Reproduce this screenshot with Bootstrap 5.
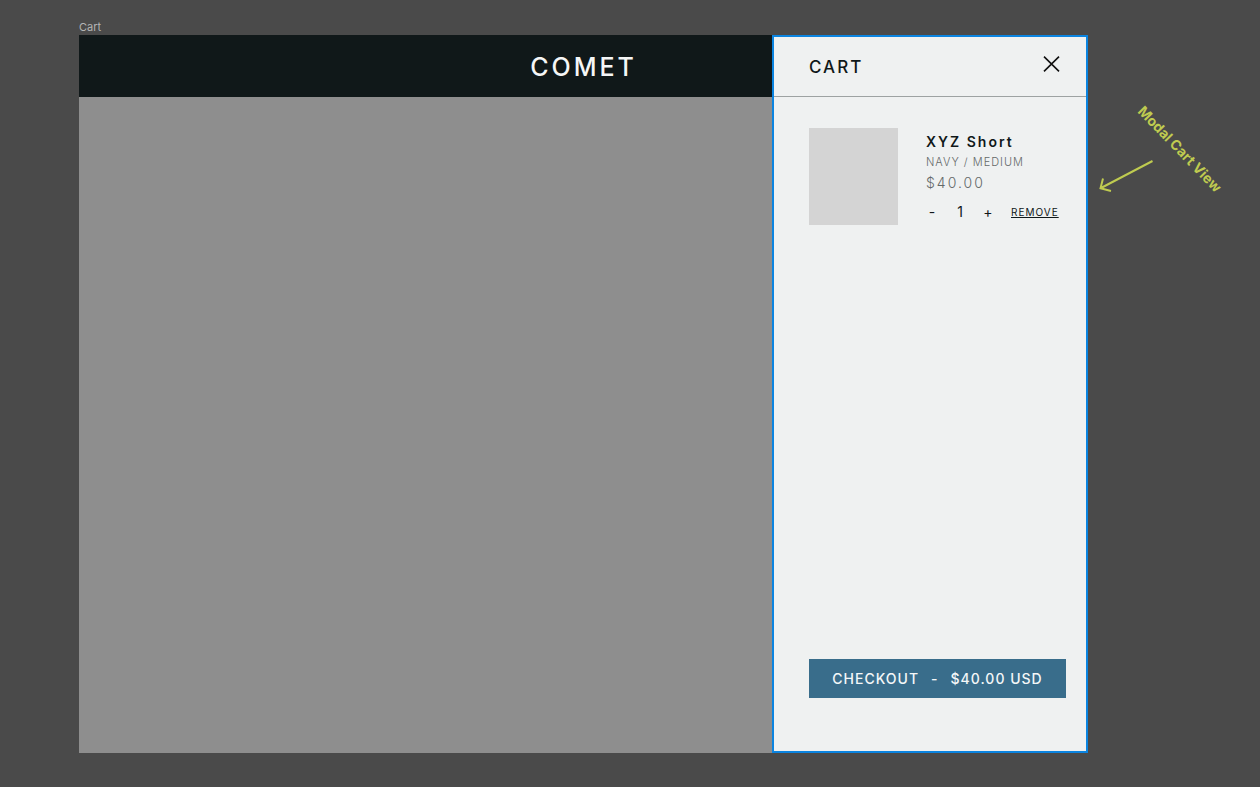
<!DOCTYPE html>
<html lang="en">
<head>
<meta charset="utf-8">
<meta name="viewport" content="width=device-width, initial-scale=1">
<title>Cart</title>
<link href="https://cdn.jsdelivr.net/npm/bootstrap@5.3.0/dist/css/bootstrap.min.css" rel="stylesheet">
<style>
  body { background: #4a4a4a; font-family: Inter, "Liberation Sans", sans-serif; color: #101819; }
  .board { padding: 19px 0 34px 79px; }
  .frame-label { font-size: 11px; line-height: 16px; color: #b4b4b4; }
  .frame { background: #8e8e8e; }
  .site-bar { background: #101819; height: 62px; padding-top: 2px; }
  .brand { color: #f5f6f6; font-size: 25px; line-height: 32px; font-weight: 500; letter-spacing: 3px; text-decoration: none; }
  .drawer { width: 316px; background: #eff1f1; border: 2px solid #0b84e0; }
  .drawer-head { height: 60px; padding: 0 26px 0 35px; border-bottom: 1px solid #9da2a2; }
  .drawer-title { font-size: 17px; line-height: 24px; font-weight: 500; letter-spacing: 2px; }
  .plain { background: none; border: 0; padding: 0; color: inherit; }
  .close-cart { padding-bottom: 6px; }
  .cart-item { padding: 31px 20px 0 35px; gap: 28px; }
  .thumb { width: 89px; height: 97px; background: #d4d4d4; }
  .item-name { font-size: 14px; line-height: 20px; font-weight: 600; letter-spacing: 2px; margin-top: 4px; }
  .item-variant { font-size: 11px; line-height: 20px; font-weight: 300; letter-spacing: 1px; color: #646969; }
  .item-price { font-size: 14px; line-height: 22px; font-weight: 300; letter-spacing: 2px; color: #646969; }
  .qty { font-size: 14px; line-height: 20px; margin-top: 8px; }
  .qty .plain { width: 12px; }
  .qty input { width: 44px; background: none; border: 0; padding: 0; color: inherit; text-align: center; }
  .remove { font-size: 10px; letter-spacing: 1px; color: inherit; margin-left: 17px; text-underline-offset: 1px; }
  .drawer-foot { padding: 0 20px 53px 35px; }
  .checkout { background: #396d8b; color: #f4f7f8; border-radius: 0; height: 39px; padding: 0; font-size: 14px; line-height: 20px; font-weight: 500; letter-spacing: 1px; gap: 12px; }
  .checkout:hover { background: #2f5d78; color: #fff; }
  .notes { width: 172px; padding-top: 62px; }
  .notes text { font: 700 14px Inter, "Liberation Sans", sans-serif; fill: #bfcb50; }
</style>
</head>
<body>
<div class="board min-vh-100 d-flex flex-column">
  <div class="frame-label">Cart</div>
  <div class="d-flex flex-grow-1">
    <main class="frame flex-grow-1 position-relative">
      <header class="site-bar d-flex align-items-center justify-content-center">
        <a class="brand" href="#">COMET</a>
      </header>
      <aside class="drawer position-absolute top-0 end-0 h-100 d-flex flex-column" aria-labelledby="cart-title">
        <div class="drawer-head d-flex align-items-center justify-content-between">
          <h1 class="drawer-title mb-0" id="cart-title">CART</h1>
          <button class="plain close-cart d-flex" type="button" aria-label="Close cart">
            <svg width="17" height="16" viewBox="0 0 17 16" fill="none" stroke="#101010" stroke-width="1.6"><path d="M1 .6l15 14.8M16 .6L1 15.4"/></svg>
          </button>
        </div>
        <div class="cart-item d-flex">
          <div class="thumb flex-shrink-0"></div>
          <div class="flex-grow-1 text-nowrap">
            <h2 class="item-name mb-0">XYZ Short</h2>
            <div class="item-variant">NAVY / MEDIUM</div>
            <div class="item-price">$40.00</div>
            <div class="qty d-flex align-items-center">
              <button class="plain" type="button" aria-label="Decrease quantity">-</button>
              <input type="text" inputmode="numeric" value="1" aria-label="Quantity">
              <button class="plain" type="button" aria-label="Increase quantity">+</button>
              <a class="remove" href="#">REMOVE</a>
            </div>
          </div>
        </div>
        <div class="drawer-foot mt-auto">
          <button class="checkout btn w-100 d-flex align-items-center justify-content-center" type="button"><span>CHECKOUT</span><span>-</span><span>$40.00 USD</span></button>
        </div>
      </aside>
    </main>
    <div class="notes flex-shrink-0">
      <svg class="d-block" width="172" height="110" viewBox="0 0 172 110">
        <path d="M64.500 64L13 91M15 81.500L12.500 91.300L23 94" fill="none" stroke="#bfcb50" stroke-width="2"/>
        <text transform="translate(49 15) rotate(46)">Modal Cart View</text>
      </svg>
    </div>
  </div>
</div>
<script src="https://cdn.jsdelivr.net/npm/bootstrap@5.3.0/dist/js/bootstrap.bundle.min.js"></script>
</body>
</html>
